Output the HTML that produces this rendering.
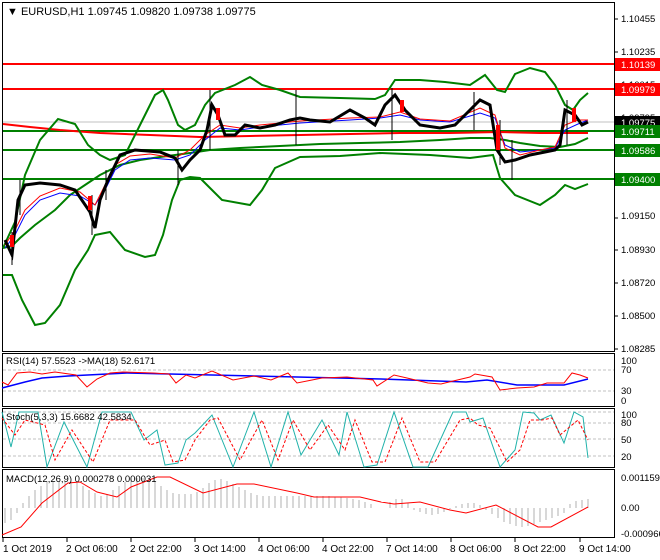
<!DOCTYPE html>
<html><head><meta charset="utf-8"><style>
html,body{margin:0;padding:0;background:#fff;}
svg{display:block;font-family:"Liberation Sans",sans-serif;}
</style></head><body>
<svg width="660" height="560" viewBox="0 0 660 560" xmlns="http://www.w3.org/2000/svg">
<rect width="660" height="560" fill="#fff"/>
<g fill="none" stroke="#000" stroke-width="1">
<rect x="2.5" y="2.5" width="612" height="349"/>
<rect x="2.5" y="353.5" width="612" height="53"/>
<rect x="2.5" y="408.5" width="612" height="59"/>
<rect x="2.5" y="469.5" width="612" height="68"/>
</g>
<text x="7" y="15" font-size="11" fill="#000">▼ EURUSD,H1  1.09745 1.09820 1.09738 1.09775</text>
<line x1="3" y1="122" x2="614" y2="122" stroke="#c0c0c0"/>
<g stroke="#ff0000" stroke-width="2"><line x1="3" y1="64" x2="614" y2="64"/><line x1="3" y1="89" x2="614" y2="89"/></g>
<g stroke="#008000" stroke-width="2"><line x1="3" y1="131" x2="614" y2="131"/><line x1="3" y1="150" x2="614" y2="150"/><line x1="3" y1="179" x2="614" y2="179"/></g>
<polyline fill="none" stroke="#ff0000" stroke-width="2" points="3,124 30,127 60,130 100,133 150,135 200,137 250,136 300,135 350,134 400,133 450,133 500,132 540,133 588,133"/>
<g fill="none" stroke="#008000" stroke-width="2">
<polyline points="3,248 15,222 25,175 40,140 58,119 75,124 88,145 100,155 110,160 125,155 140,125 155,95 163,90 168,100 178,125 185,130 195,125 205,105 215,93 235,85 250,77 262,85 280,90 300,97 340,98 375,99 385,95 395,80 420,80 445,82 470,85 485,75 497,90 505,92 515,74 530,68 545,72 555,85 565,105 573,110 580,100 588,93"/>
<polyline points="3,248 12,246 20,238 35,225 55,210 70,195 85,185 100,175 120,165 140,160 160,157 175,155 190,153 210,150 240,148 280,146 320,144 360,143 400,142 440,140 470,138 490,138 505,140 520,143 540,146 560,147 575,144 588,138"/>
<polyline points="3,275 12,275 22,300 35,325 45,323 60,305 75,270 88,250 95,235 110,232 125,250 145,257 155,255 163,235 172,200 180,180 190,177 200,178 210,188 222,200 250,205 262,190 275,168 300,157 340,156 380,153 430,155 470,158 493,155 500,178 515,195 540,205 555,195 565,185 575,189 588,184"/>
</g>
<polyline fill="none" stroke="#0000ff" points="5,248 15,235 25,215 40,200 60,193 80,196 95,205 105,190 115,170 130,160 150,158 175,160 190,155 205,140 220,128 240,130 260,127 300,123 350,120 380,118 400,115 420,120 450,122 480,113 495,118 505,145 520,152 540,150 555,148 565,130 578,124 588,120"/>
<polyline fill="none" stroke="#ff0000" points="5,245 15,230 25,210 40,196 60,188 80,192 95,205 105,185 115,165 130,156 150,154 175,158 190,150 205,135 220,125 240,128 260,125 300,121 350,118 380,117 400,112 420,119 450,121 480,108 495,115 505,148 520,155 540,150 555,147 565,125 578,120 588,120"/>
<polyline fill="none" stroke="#000" stroke-width="3" points="5,240 12,255 18,200 25,185 40,183 60,185 75,190 90,212 95,228 100,200 108,180 120,155 135,150 160,152 175,158 182,170 190,160 200,150 207,130 212,105 218,115 225,135 235,135 245,125 260,128 275,125 290,120 300,118 310,120 330,122 350,110 365,118 375,125 385,105 395,95 405,110 420,125 440,128 455,125 470,110 480,100 490,105 497,150 505,162 515,160 530,155 545,152 555,150 560,145 565,110 575,115 582,125 588,122"/>
<g stroke="#000" stroke-width="1">
<line x1="12" y1="232" x2="12" y2="265"/><line x1="20" y1="180" x2="20" y2="215"/><line x1="92" y1="195" x2="92" y2="235"/><line x1="106" y1="170" x2="106" y2="200"/><line x1="178" y1="150" x2="178" y2="185"/><line x1="210" y1="90" x2="210" y2="150"/><line x1="296" y1="90" x2="296" y2="145"/><line x1="392" y1="88" x2="392" y2="140"/><line x1="474" y1="92" x2="474" y2="130"/><line x1="500" y1="120" x2="500" y2="165"/><line x1="512" y1="140" x2="512" y2="180"/><line x1="567" y1="100" x2="567" y2="145"/>
</g>
<g fill="#ff0000"><rect x="10" y="235" width="4" height="12"/><rect x="88" y="196" width="4" height="14"/><rect x="216" y="108" width="4" height="12"/><rect x="400" y="100" width="4" height="12"/><rect x="496" y="125" width="4" height="25"/><rect x="572" y="108" width="4" height="14"/></g>
<g font-size="9.5" fill="#000">
<text x="621" y="22">1.10455</text><text x="621" y="55">1.10235</text><text x="621" y="88">1.10015</text><text x="621" y="121">1.09795</text><text x="621" y="186">1.09370</text><text x="621" y="219">1.09150</text><text x="621" y="253">1.08930</text><text x="621" y="286">1.08720</text><text x="621" y="319">1.08500</text><text x="621" y="352">1.08285</text>
</g>
<g stroke="#000"><line x1="615" y1="19" x2="618" y2="19"/><line x1="615" y1="52" x2="618" y2="52"/><line x1="615" y1="218" x2="618" y2="218"/><line x1="615" y1="250" x2="618" y2="250"/><line x1="615" y1="283" x2="618" y2="283"/><line x1="615" y1="316" x2="618" y2="316"/><line x1="615" y1="349" x2="618" y2="349"/></g>
<rect x="615" y="58" width="45" height="13" fill="#ff0000"/><text x="621" y="68" font-size="9.5" fill="#fff">1.10139</text>
<rect x="615" y="83" width="45" height="13" fill="#ff0000"/><text x="621" y="93" font-size="9.5" fill="#fff">1.09979</text>
<rect x="615" y="116" width="45" height="13" fill="#000"/><text x="621" y="126" font-size="9.5" fill="#fff">1.09775</text>
<rect x="615" y="125" width="45" height="13" fill="#008000"/><text x="621" y="135" font-size="9.5" fill="#fff">1.09711</text>
<rect x="615" y="144" width="45" height="13" fill="#008000"/><text x="621" y="154" font-size="9.5" fill="#fff">1.09586</text>
<rect x="615" y="173" width="45" height="13" fill="#008000"/><text x="621" y="183" font-size="9.5" fill="#fff">1.09400</text>
<!-- RSI -->
<g stroke="#c0c0c0" stroke-dasharray="3,2"><line x1="3" y1="370" x2="614" y2="370"/><line x1="3" y1="391" x2="614" y2="391"/></g>
<text x="6" y="364" font-size="9.5">RSI(14) 57.5523  -&gt;MA(18) 52.6171</text>
<polyline fill="none" stroke="#0000ff" stroke-width="1.5" points="2,388 25,382 42,378 68,376 127,373 212,375 297,377 381,379 466,382 487,380 517,385 564,385 588,379"/>
<polyline fill="none" stroke="#ff0000" points="2,382 8,385 17,373 30,372 42,374 55,372 76,375 87,387 97,379 110,373 123,372 153,373 169,374 176,383 186,375 195,378 212,371 233,380 254,376 271,380 288,373 297,383 322,378 347,377 373,380 377,386 394,375 407,378 428,383 441,384 449,382 470,377 475,374 492,377 500,390 517,388 534,387 547,383 564,383 572,373 580,375 588,378"/>
<g font-size="9.5"><text x="621" y="364">100</text><text x="621" y="373">70</text><text x="621" y="394">30</text><text x="621" y="404">0</text></g>
<!-- Stoch -->
<g stroke="#c0c0c0" stroke-dasharray="3,2"><line x1="3" y1="412" x2="614" y2="412"/><line x1="3" y1="423" x2="614" y2="423"/><line x1="3" y1="439" x2="614" y2="439"/><line x1="3" y1="456" x2="614" y2="456"/></g>
<polyline fill="none" stroke="#20b2aa" points="2,412 11,447 19,412 38,412 47,467 64,422 87,467 102,412 131,412 144,440 157,430 165,465 178,463 186,440 195,433 212,415 233,467 254,412 271,467 288,412 301,455 322,420 339,455 347,412 364,467 377,465 394,412 413,467 428,467 453,412 466,412 470,422 483,418 500,467 515,450 523,412 534,413 540,420 551,415 564,443 574,412 583,417 588,458"/>
<polyline fill="none" stroke="#ff0000" stroke-dasharray="3,2" points="2,418 15,435 25,420 45,425 55,460 72,430 93,462 110,420 135,420 150,445 165,440 173,462 185,460 195,440 210,420 218,418 240,460 262,420 278,460 293,420 310,450 328,425 345,450 355,420 372,462 385,462 402,418 420,462 435,462 460,420 470,418 478,425 490,428 507,462 520,450 530,420 542,420 552,418 560,435 578,420 588,440"/>
<text x="6" y="420" font-size="9.5">Stoch(5,3,3) 15.6682 42.5834</text>
<g font-size="9.5"><text x="621" y="418">100</text><text x="621" y="426">80</text><text x="621" y="443">50</text><text x="621" y="460">20</text></g>
<!-- MACD -->
<g stroke="#b0b0b0">
<line x1="5" y1="508" x2="5" y2="523"/><line x1="11" y1="508" x2="11" y2="520"/><line x1="17" y1="508" x2="17" y2="513"/><line x1="23" y1="508" x2="23" y2="503"/><line x1="29" y1="508" x2="29" y2="496"/><line x1="35" y1="508" x2="35" y2="490"/><line x1="41" y1="508" x2="41" y2="486"/><line x1="47" y1="508" x2="47" y2="482"/><line x1="53" y1="508" x2="53" y2="481"/><line x1="59" y1="508" x2="59" y2="481"/><line x1="65" y1="508" x2="65" y2="481"/><line x1="71" y1="508" x2="71" y2="481"/><line x1="77" y1="508" x2="77" y2="483"/><line x1="83" y1="508" x2="83" y2="486"/><line x1="89" y1="508" x2="89" y2="490"/><line x1="95" y1="508" x2="95" y2="493"/><line x1="101" y1="508" x2="101" y2="496"/><line x1="107" y1="508" x2="107" y2="494"/><line x1="113" y1="508" x2="113" y2="490"/><line x1="119" y1="508" x2="119" y2="486"/><line x1="125" y1="508" x2="125" y2="482"/><line x1="131" y1="508" x2="131" y2="479"/><line x1="137" y1="508" x2="137" y2="478"/><line x1="143" y1="508" x2="143" y2="478"/><line x1="149" y1="508" x2="149" y2="480"/><line x1="155" y1="508" x2="155" y2="482"/><line x1="161" y1="508" x2="161" y2="486"/><line x1="167" y1="508" x2="167" y2="490"/><line x1="173" y1="508" x2="173" y2="493"/><line x1="179" y1="508" x2="179" y2="494"/><line x1="185" y1="508" x2="185" y2="494"/><line x1="191" y1="508" x2="191" y2="494"/><line x1="197" y1="508" x2="197" y2="492"/><line x1="203" y1="508" x2="203" y2="488"/><line x1="209" y1="508" x2="209" y2="483"/><line x1="215" y1="508" x2="215" y2="480"/><line x1="221" y1="508" x2="221" y2="479"/><line x1="227" y1="508" x2="227" y2="481"/><line x1="233" y1="508" x2="233" y2="484"/><line x1="239" y1="508" x2="239" y2="487"/><line x1="245" y1="508" x2="245" y2="490"/><line x1="251" y1="508" x2="251" y2="493"/><line x1="257" y1="508" x2="257" y2="495"/><line x1="263" y1="508" x2="263" y2="496"/><line x1="269" y1="508" x2="269" y2="496"/><line x1="275" y1="508" x2="275" y2="496"/><line x1="281" y1="508" x2="281" y2="496"/><line x1="287" y1="508" x2="287" y2="496"/><line x1="293" y1="508" x2="293" y2="496"/><line x1="299" y1="508" x2="299" y2="496"/><line x1="305" y1="508" x2="305" y2="496"/><line x1="311" y1="508" x2="311" y2="496"/><line x1="317" y1="508" x2="317" y2="496"/><line x1="323" y1="508" x2="323" y2="496"/><line x1="329" y1="508" x2="329" y2="496"/><line x1="335" y1="508" x2="335" y2="497"/><line x1="341" y1="508" x2="341" y2="497"/><line x1="347" y1="508" x2="347" y2="498"/><line x1="353" y1="508" x2="353" y2="499"/><line x1="359" y1="508" x2="359" y2="500"/><line x1="365" y1="508" x2="365" y2="502"/><line x1="371" y1="508" x2="371" y2="504"/><line x1="390" y1="508" x2="390" y2="502"/><line x1="396" y1="508" x2="396" y2="499"/><line x1="402" y1="508" x2="402" y2="499"/><line x1="408" y1="508" x2="408" y2="503"/><line x1="414" y1="508" x2="414" y2="510"/><line x1="420" y1="508" x2="420" y2="512"/><line x1="426" y1="508" x2="426" y2="514"/><line x1="432" y1="508" x2="432" y2="515"/><line x1="438" y1="508" x2="438" y2="514"/><line x1="444" y1="508" x2="444" y2="512"/><line x1="450" y1="508" x2="450" y2="509"/><line x1="456" y1="508" x2="456" y2="506"/><line x1="462" y1="508" x2="462" y2="504"/><line x1="468" y1="508" x2="468" y2="503"/><line x1="474" y1="508" x2="474" y2="503"/><line x1="480" y1="508" x2="480" y2="505"/><line x1="486" y1="508" x2="486" y2="510"/><line x1="492" y1="508" x2="492" y2="514"/><line x1="498" y1="508" x2="498" y2="518"/><line x1="504" y1="508" x2="504" y2="522"/><line x1="510" y1="508" x2="510" y2="524"/><line x1="516" y1="508" x2="516" y2="526"/><line x1="522" y1="508" x2="522" y2="527"/><line x1="528" y1="508" x2="528" y2="526"/><line x1="534" y1="508" x2="534" y2="524"/><line x1="540" y1="508" x2="540" y2="522"/><line x1="546" y1="508" x2="546" y2="520"/><line x1="552" y1="508" x2="552" y2="518"/><line x1="558" y1="508" x2="558" y2="516"/><line x1="564" y1="508" x2="564" y2="513"/><line x1="570" y1="508" x2="570" y2="504"/><line x1="576" y1="508" x2="576" y2="501"/><line x1="582" y1="508" x2="582" y2="500"/><line x1="588" y1="508" x2="588" y2="499"/>
</g>
<polyline fill="none" stroke="#ff0000" points="2,535 21,527 42,503 68,483 80,482 97,492 117,497 131,487 157,477 170,477 203,493 237,484 254,484 297,493 314,497 360,497 381,502 394,504 420,502 450,510 466,513 496,505 538,527 551,527 588,507"/>
<text x="6" y="482" font-size="9.5">MACD(12,26,9) 0.000278 0.000031</text>
<g font-size="9.5"><text x="621" y="481">0.001159</text><text x="621" y="511">0.00</text><text x="621" y="537">-0.000966</text></g>
<!-- time axis -->
<g stroke="#000"><line x1="3" y1="538" x2="3" y2="542"/><line x1="67" y1="538" x2="67" y2="542"/><line x1="131" y1="538" x2="131" y2="542"/><line x1="195" y1="538" x2="195" y2="542"/><line x1="259" y1="538" x2="259" y2="542"/><line x1="323" y1="538" x2="323" y2="542"/><line x1="387" y1="538" x2="387" y2="542"/><line x1="451" y1="538" x2="451" y2="542"/><line x1="515" y1="538" x2="515" y2="542"/><line x1="580" y1="538" x2="580" y2="542"/></g>
<g font-size="10"><text x="3" y="552">1 Oct 2019</text><text x="66" y="552">2 Oct 06:00</text><text x="130" y="552">2 Oct 22:00</text><text x="194" y="552">3 Oct 14:00</text><text x="258" y="552">4 Oct 06:00</text><text x="322" y="552">4 Oct 22:00</text><text x="386" y="552">7 Oct 14:00</text><text x="450" y="552">8 Oct 06:00</text><text x="514" y="552">8 Oct 22:00</text><text x="579" y="552">9 Oct 14:00</text></g>
</svg>
</body></html>
